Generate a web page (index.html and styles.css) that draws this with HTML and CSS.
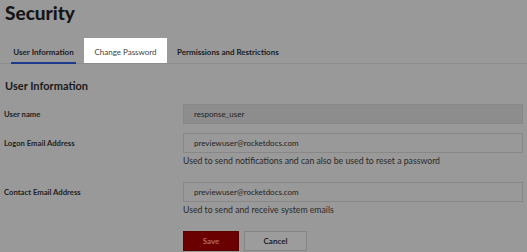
FILE: index.html
```html
<!DOCTYPE html>
<html>
<head>
<meta charset="utf-8">
<link rel="stylesheet" href="styles.css">
</head>
<body>
<div class="page">
  <h1 class="title">Security</h1>
  <nav class="tabs">
    <div class="tab tab-active">User Information</div>
    <div class="tab tab-highlight">Change Password</div>
    <div class="tab tab-plain">Permissions and Restrictions</div>
  </nav>
  <h2 class="section-title">User Information</h2>
  <div class="form">
    <div class="row">
      <div class="label">User name</div>
      <div class="field">
        <div class="input input-disabled">response_user</div>
      </div>
    </div>
    <div class="row">
      <div class="label">Logon Email Address</div>
      <div class="field">
        <div class="input">previewuser@rocketdocs.com</div>
        <div class="hint">Used to send notifications and can also be used to reset a password</div>
      </div>
    </div>
    <div class="row">
      <div class="label">Contact Email Address</div>
      <div class="field">
        <div class="input">previewuser@rocketdocs.com</div>
        <div class="hint">Used to send and receive system emails</div>
      </div>
    </div>
    <div class="row">
      <div class="label"></div>
      <div class="field buttons">
        <div class="btn btn-save">Save</div>
        <div class="btn btn-cancel">Cancel</div>
      </div>
    </div>
  </div>
</div>
</body>
</html>
```
FILE: styles.css
```css
html, body {
  margin: 0;
  padding: 0;
  background: #999999;
}
body {
  font-family: Lato, "Open Sans", sans-serif;
  color: #1c1c1c;
  width: 527px;
  height: 252px;
  overflow: hidden;
}
.page {
  display: flex;
  flex-direction: column;
}
.title {
  margin: 0;
  padding: 0 0 0 5px;
  font-size: 19px;
  font-weight: 900;
  line-height: 26px;
  height: 26px;
  color: #161616;
}
.tabs {
  display: flex;
  align-items: stretch;
  margin-top: 12px;
  height: 25px;
  border-bottom: 1px solid #8d8d8d;
  font-size: 8px;
}
.tab {
  display: flex;
  align-items: center;
  padding-top: 3px;
  box-sizing: border-box;
}
.tab-active {
  margin-left: 11px;
  width: 65px;
  justify-content: center;
  font-weight: 700;
  border-bottom: 2px solid #1d3a8c;
  margin-bottom: -1px;
}
.tab-highlight {
  margin-left: 8px;
  width: 83px;
  justify-content: center;
  background: #ffffff;
  color: #444444;
}
.tab-plain {
  padding-left: 10px;
  font-weight: 700;
}
.section-title {
  margin: 15px 0 0 5px;
  font-size: 11px;
  font-weight: 700;
  line-height: 14px;
  color: #1a1a1a;
}
.form {
  display: flex;
  flex-direction: column;
  margin-top: 11px;
}
.row {
  display: flex;
  margin-bottom: 9px;
}
.row:last-child {
  margin-bottom: 0;
}
.label {
  width: 183px;
  padding-left: 4px;
  box-sizing: border-box;
  font-size: 7.7px;
  line-height: 20px;
  font-weight: 700;
  color: #222222;
}
.field {
  width: 340px;
  display: flex;
  flex-direction: column;
}
.input {
  height: 20px;
  box-sizing: border-box;
  border: 1px solid #878787;
  padding-left: 10px;
  font-size: 8px;
  line-height: 18px;
  color: #222222;
}
.input-disabled {
  background: #8d8d8d;
}
.hint {
  font-size: 8.7px;
  line-height: 12px;
  margin-top: 2px;
  margin-bottom: 6px;
  color: #2a2a2a;
}
.buttons {
  flex-direction: row;
  gap: 5px;
}
.btn {
  height: 20px;
  box-sizing: border-box;
  display: flex;
  align-items: center;
  justify-content: center;
  font-size: 8px;
  font-weight: 700;
}
.btn-save {
  width: 56px;
  background: #6b0000;
  color: #b06a6a;
  border: 1px solid #5a0000;
}
.btn-cancel {
  width: 63px;
  background: #9c9c9c;
  border: 1px solid #858585;
  color: #1e1e1e;
}
```
